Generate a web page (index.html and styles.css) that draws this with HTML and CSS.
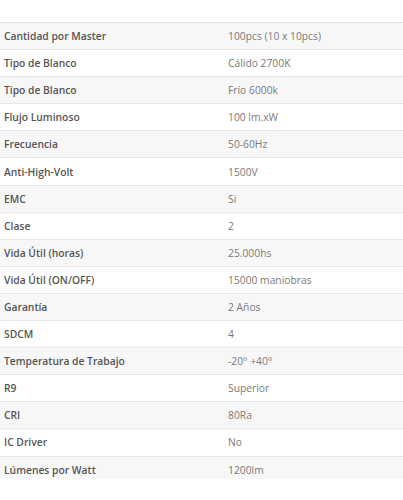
FILE: index.html
```html
<!DOCTYPE html>
<html lang="es">
<head>
<meta charset="utf-8">
<title>Especificaciones</title>
<link rel="stylesheet" href="styles.css">
</head>
<body>
<div class="sheet">
<table class="specs">
<tbody>
<tr><th>Cantidad por Master</th><td>100pcs (10 x 10pcs)</td></tr>
<tr><th>Tipo de Blanco</th><td>Cálido 2700K</td></tr>
<tr><th>Tipo de Blanco</th><td>Frío 6000k</td></tr>
<tr><th>Flujo Luminoso</th><td>100 lm.xW</td></tr>
<tr><th>Frecuencia</th><td>50-60Hz</td></tr>
<tr><th>Anti-High-Volt</th><td>1500V</td></tr>
<tr><th>EMC</th><td>Si</td></tr>
<tr><th>Clase</th><td>2</td></tr>
<tr><th>Vida Útil (horas)</th><td>25.000hs</td></tr>
<tr><th>Vida Útil (ON/OFF)</th><td>15000 maniobras</td></tr>
<tr><th>Garantía</th><td>2 Años</td></tr>
<tr><th>SDCM</th><td>4</td></tr>
<tr><th>Temperatura de Trabajo</th><td>-20° +40°</td></tr>
<tr><th>R9</th><td>Superior</td></tr>
<tr><th>CRI</th><td>80Ra</td></tr>
<tr><th>IC Driver</th><td>No</td></tr>
<tr><th>Lúmenes por Watt</th><td>1200lm</td></tr>
</tbody>
</table>
</div>
</body>
</html>
```
FILE: styles.css
```css
html, body {
  margin: 0;
  padding: 0;
  background: #ffffff;
}
body {
  padding-top: 22px;
  font-family: "Open Sans", "Liberation Sans", sans-serif;
  font-size: 10.3px;
}
.sheet {
  height: 457px;
  overflow: hidden;
}
.specs {
  width: 100%;
  border-collapse: collapse;
  border-top: 1px solid #e3e3e3;
}
.specs tr {
  height: 27.1px;
  border-bottom: 1px solid #e6e6e6;
}
.specs tr:nth-child(odd) {
  background: #f7f7f7;
}
.specs th {
  width: 216px;
  padding: 0 4px;
  text-align: left;
  font-weight: 600;
  color: #555555;
  vertical-align: middle;
}
.specs td {
  padding: 0 4px;
  color: #7a7a7a;
  vertical-align: middle;
}
```
